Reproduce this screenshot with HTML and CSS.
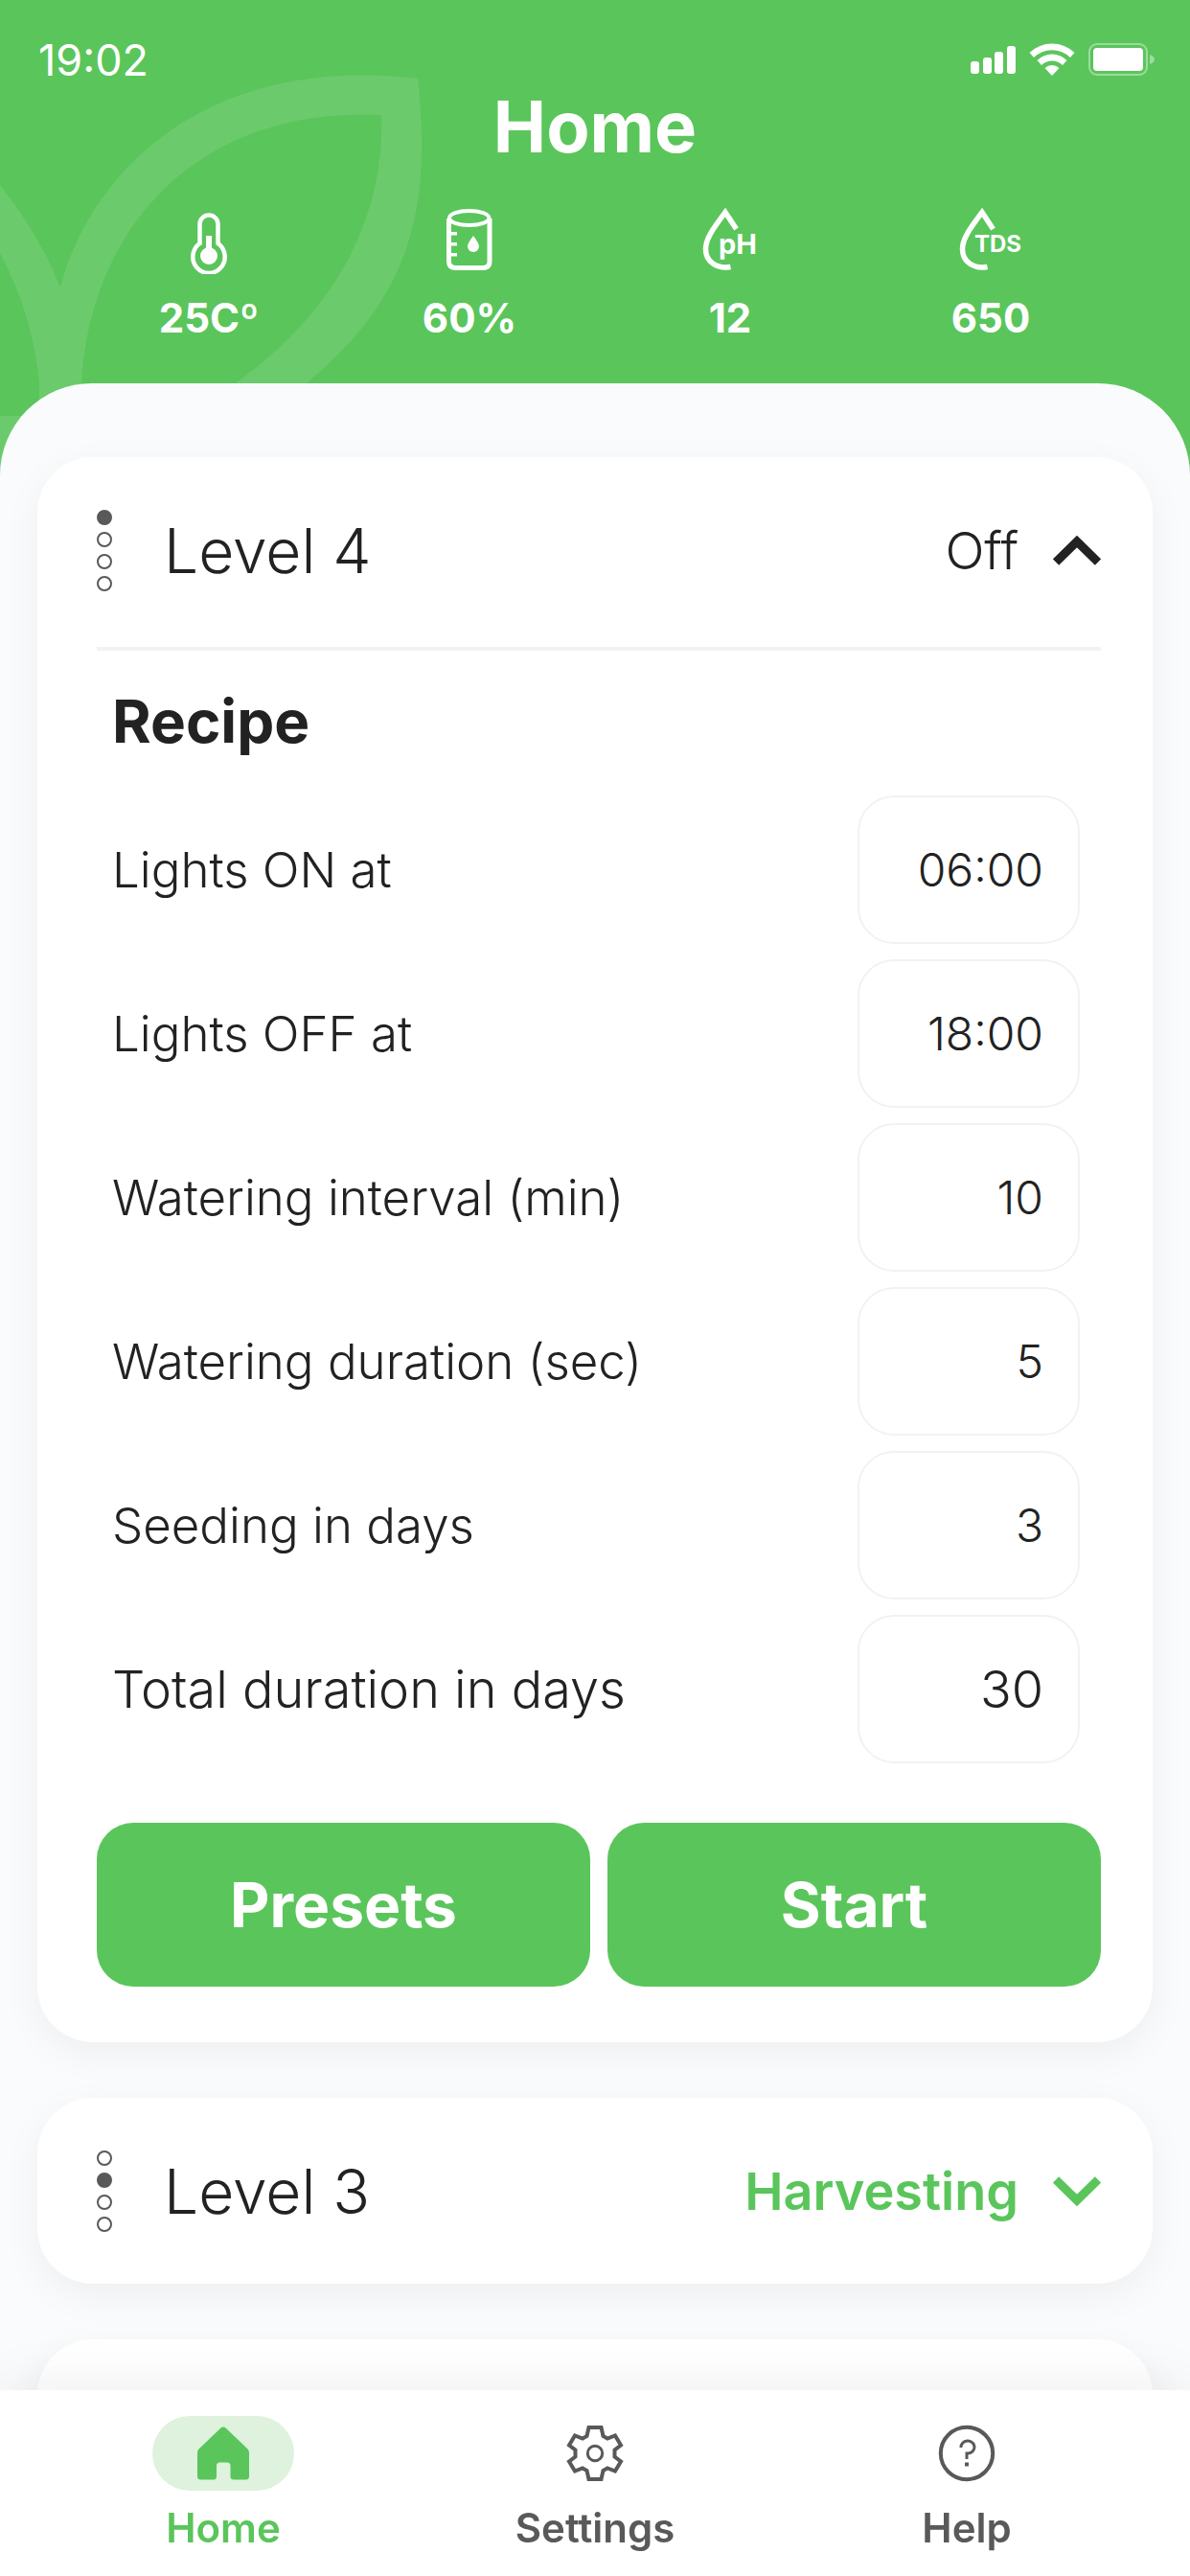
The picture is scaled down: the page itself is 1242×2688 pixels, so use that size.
FILE: index.html
```html
<!DOCTYPE html>
<html lang="en">
<head>
  <meta charset="utf-8">
  <meta name="viewport" content="width=device-width, initial-scale=1">
  <title>Home</title>
  <link rel="stylesheet" href="styles.css">
</head>
<body>
  <div class="app">
    <div class="screen">
      <svg class="leaf" viewBox="0 0 460 500" aria-hidden="true">
        <path fill-rule="evenodd" d="M0 193 Q42 247 63 300 C92 186 210 55 436 82 C451 220 428 310 320 400 L246 400 C360 318 402 215 398 120 C220 110 95 225 85 400 L85 434 L41 434 L41 400 Q35 330 0 264 Z"/>
        <path d="M0 434 H60 V500 H0 Z"/>
      </svg>

      <header class="header">
        <div class="status">
          <span class="status-time">19:02</span>
          <div class="status-icons">
            <svg width="47" height="29" viewBox="0 0 47 29" aria-hidden="true">
              <rect x="0" y="16" width="9" height="13" rx="3"/>
              <rect x="13" y="12" width="9" height="17" rx="3"/>
              <rect x="25" y="6" width="9" height="23" rx="3"/>
              <rect x="38" y="0" width="9" height="29" rx="3"/>
            </svg>
            <svg width="48" height="34" viewBox="0 0 48 34" aria-hidden="true">
              <path d="M0.5 10 A34 34 0 0 1 47.500 10 L43 15 A27 27 0 0 0 5 15 Z"/>
              <path d="M8.500 18 A22 22 0 0 1 39.500 18 L35 23 A15.500 15.500 0 0 0 13 23 Z"/>
              <path d="M16.500 26 A11 11 0 0 1 31.500 26 L24 34 Z"/>
            </svg>
            <svg width="69" height="34" viewBox="0 0 69 34" aria-hidden="true">
              <rect x="1" y="1" width="60" height="32" rx="8" fill="none" stroke="#fff" stroke-opacity=".4" stroke-width="2"/>
              <rect x="5" y="5" width="52" height="24" rx="4"/>
              <path d="M64 12 Q69 14 69 17 Q69 20 64 22 Z" fill-opacity=".4"/>
            </svg>
          </div>
        </div>

        <h1 class="title">Home</h1>

        <ul class="stats">
          <li class="stat">
            <svg width="38" height="70" viewBox="0 0 38 70" aria-label="Temperature" role="img">
              <path d="M9.500 38 V18 A9.500 9.500 0 0 1 28.500 18 V38 A16.700 17 0 1 1 9.500 38 Z" fill="none" stroke="#fff" stroke-width="4.500"/>
              <circle cx="19" cy="51" r="9"/>
              <path d="M16 30 H22 V46 H16 Z"/>
            </svg>
            <span>25Cº</span>
          </li>
          <li class="stat">
            <svg width="48" height="70" viewBox="0 0 48 70" aria-label="Tank level" role="img">
              <path d="M2.500 12 V57 Q2.500 63.500 10 63.500 H37.500 Q45 63.500 45 57 V12" fill="none" stroke="#fff" stroke-width="5"/>
              <ellipse cx="23.700" cy="11.500" rx="20.700" ry="7.500" fill="none" stroke="#fff" stroke-width="4"/>
              <path d="M4 26 H11 V29.500 H4 Z M4 37 H11 V40.500 H4 Z M4 48 H11 V51.500 H4 Z"/>
              <path d="M28 30 Q34 38 34 41 A6 6 0 1 1 22 41 Q22 38 28 30 Z"/>
            </svg>
            <span>60%</span>
          </li>
          <li class="stat">
            <svg width="58" height="70" viewBox="0 0 58 70" aria-hidden="true">
              <path d="M35.500 23 L24 5.500 C11 23 3.500 33 3.500 44 C3.500 57 15 65 29.500 62.500" fill="none" stroke="#fff" stroke-width="5.500" stroke-miterlimit="6"/>
              <text class="icon-ph" x="17" y="49">pH</text>
            </svg>
            <span>12</span>
          </li>
          <li class="stat">
            <svg width="66" height="70" viewBox="0 0 66 70" aria-hidden="true">
              <path d="M35.500 23 L24 5.500 C11 23 3.500 33 3.500 44 C3.500 57 15 65 29.500 62.500" fill="none" stroke="#fff" stroke-width="5.500" stroke-miterlimit="6"/>
              <text class="icon-tds" x="16" y="47">TDS</text>
            </svg>
            <span>650</span>
          </li>
        </ul>
      </header>

      <main class="sheet">
        <section class="card">
          <button class="level" type="button" aria-expanded="true">
            <span class="dots"><i class="dot dot-on"></i><i class="dot"></i><i class="dot"></i><i class="dot"></i></span>
            <span class="level-name">Level 4</span>
            <span class="level-state">Off</span>
            <svg class="chevron" width="50" height="31" viewBox="0 0 50 31" aria-hidden="true"><path d="M3 27.500 L25 6 L47 27.500"/></svg>
          </button>

          <form class="recipe">
            <h2 class="recipe-title">Recipe</h2>
            <div class="rows">
              <div class="row"><label for="lights-on">Lights ON at</label><input id="lights-on" type="text" value="06:00"></div>
              <div class="row"><label for="lights-off">Lights OFF at</label><input id="lights-off" type="text" value="18:00"></div>
              <div class="row"><label for="interval">Watering interval (min)</label><input id="interval" type="text" value="10"></div>
              <div class="row"><label for="duration">Watering duration (sec)</label><input id="duration" type="text" value="5"></div>
              <div class="row"><label for="seeding">Seeding in days</label><input id="seeding" type="text" value="3"></div>
              <div class="row row-total"><label for="total">Total duration in days</label><input id="total" type="text" value="30"></div>
            </div>
            <div class="actions">
              <button class="action" type="button">Presets</button>
              <button class="action" type="button">Start</button>
            </div>
          </form>
        </section>

        <section class="card">
          <button class="level level-active" type="button" aria-expanded="false">
            <span class="dots"><i class="dot"></i><i class="dot dot-on"></i><i class="dot"></i><i class="dot"></i></span>
            <span class="level-name">Level 3</span>
            <span class="level-state">Harvesting</span>
            <svg class="chevron" width="50" height="31" viewBox="0 0 50 31" aria-hidden="true"><path d="M3 3.500 L25 25 L47 3.500"/></svg>
          </button>
        </section>

        <section class="card card-next" aria-label="Level 2"></section>
      </main>
    </div>

    <nav class="nav">
      <a class="nav-item nav-current" href="#home">
        <span class="nav-icon">
          <svg width="54" height="56" viewBox="0 0 54 56" aria-hidden="true">
            <path d="M24.500 1.500 Q27 -0.500 29.500 1.500 L52.500 23.500 Q54 25 54 27 V52 Q54 55.500 50.500 55.500 H38 Q34.500 55.500 34.500 52 V41 Q34.500 37.500 31 37.500 H23.500 Q20 37.500 20 41 V52 Q20 55.500 16.500 55.500 H3.500 Q0 55.500 0 52 V27 Q0 25 1.500 23.500 Z"/>
          </svg>
        </span>
        Home
      </a>
      <a class="nav-item" href="#settings">
        <span class="nav-icon">
          <svg width="60" height="60" viewBox="-30 -30 60 60" aria-hidden="true">
            <g fill="none" stroke="#595959" stroke-width="4">
              <path d="M-6.500 -27 H6.500 L8.500 -18 L13 -15.500 L21 -18.500 L27 -8.500 L20.500 -3.500 V3.500 L27 8.500 L21 18.500 L13 15.500 L8.500 18 L6.500 27 H-6.500 L-8.500 18 L-13 15.500 L-21 18.500 L-27 8.500 L-20.500 3.500 V-3.500 L-27 -8.500 L-21 -18.500 L-13 -15.500 L-8.500 -18 Z"/>
              <circle r="7.700" stroke-width="3"/>
            </g>
          </svg>
        </span>
        Settings
      </a>
      <a class="nav-item" href="#help">
        <span class="nav-icon">
          <svg width="60" height="60" viewBox="-30 -30 60 60" aria-hidden="true">
            <g fill="none" stroke="#595959">
              <circle r="27.200" stroke-width="4"/>
              <path stroke-width="3" d="M-6 -6 A7 6.500 0 1 1 1.500 0 H0 V6"/>
              <path stroke-width="4" d="M-2 11.500 H2"/>
            </g>
          </svg>
        </span>
        Help
      </a>
    </nav>
  </div>
</body>
</html>
```
FILE: styles.css
```css
* {
  box-sizing: border-box;
}

body {
  margin: 0;
  font-family: Inter, "Open Sans", sans-serif;
  color: #222;
}

h1,
h2,
ul {
  margin: 0;
  padding: 0;
}

button,
input {
  font: inherit;
  color: inherit;
}

svg {
  display: block;
  flex: none;
}

.app {
  display: flex;
  flex-direction: column;
  height: 100vh;
}

.screen {
  position: relative;
  flex: 1;
  min-height: 0;
  overflow-y: auto;
  scrollbar-width: none;
  background: #5ac55b;
}

.leaf {
  position: absolute;
  top: 0;
  left: 0;
  width: 460px;
  height: 500px;
  fill: #fff;
  opacity: 0.1;
}

/* Header */

.header {
  position: relative;
  padding: 34px 0 40px;
  color: #fff;
  fill: #fff;
}

.status {
  display: flex;
  align-items: center;
  justify-content: space-between;
  height: 56px;
  padding: 0 37px 0 40px;
}

.status-time {
  font-size: 45px;
}

.status-icons {
  display: flex;
  align-items: center;
  gap: 14px;
}

.title {
  font-size: 74px;
  font-weight: 700;
  line-height: 84px;
  text-align: center;
}

.stats {
  display: grid;
  grid-template-columns: repeat(4, 1fr);
  margin-top: 42px;
  padding: 0 72px 0 82px;
  list-style: none;
}

.stat {
  display: flex;
  flex-direction: column;
  align-items: center;
  gap: 18px;
  font-size: 42px;
  font-weight: 700;
  line-height: 56px;
}

.icon-ph {
  font-size: 29px;
}

.icon-tds {
  font-size: 24px;
}

/* Level cards */

.sheet {
  position: relative;
  display: flex;
  flex-direction: column;
  gap: 58px;
  padding: 77px 39px 58px;
  border-radius: 96px 96px 0 0;
  background: #fafbfd;
}

.card {
  padding: 0 54px 0 62px;
  border-radius: 58px;
  background: #fff;
  box-shadow: 0 12px 40px rgba(0, 0, 0, 0.05);
}

.card-next {
  min-height: 194px;
}

.level {
  display: flex;
  align-items: center;
  width: 100%;
  height: 194px;
  padding: 0;
  border: 0;
  background: none;
  text-align: left;
}

.dots {
  display: grid;
  gap: 7px;
  margin-right: 54px;
}

.dot {
  width: 16px;
  height: 16px;
  border: 2px solid #595959;
  border-radius: 50%;
}

.dot-on {
  background: #595959;
}

.level-name {
  flex: 1;
  font-size: 64px;
  font-weight: 300;
}

.level-state {
  margin-right: 36px;
  font-size: 54px;
  font-weight: 300;
}

.chevron {
  fill: none;
  stroke: #222;
  stroke-width: 9;
}

.level-active .level-state {
  color: #5ac55b;
  font-weight: 600;
}

.level-active .chevron {
  stroke: #5ac55b;
}

/* Recipe form */

.recipe {
  margin-top: 4px;
  padding: 38px 0 58px;
  border-top: 4px solid #f2f2f3;
}

.recipe-title {
  padding-left: 16px;
  font-size: 62px;
  font-weight: 700;
  line-height: 72px;
}

.rows {
  display: grid;
  gap: 16px;
  margin: 41px 22px 62px 16px;
  font-weight: 300;
}

.row {
  display: flex;
  align-items: center;
  justify-content: space-between;
  font-size: 51px;
}

.row input {
  width: 232px;
  height: 155px;
  padding: 0 36px;
  border: 2px solid #f2f2f3;
  border-radius: 38px;
  background: #fff;
  font-size: 48px;
  text-align: right;
}

.row-total,
.row-total input {
  font-size: 54px;
}

.actions {
  display: grid;
  grid-template-columns: 1fr 1fr;
  gap: 18px;
}

.action {
  height: 171px;
  padding: 0;
  border: 0;
  border-radius: 38px;
  background: #5ac55b;
  color: #fff;
  font-size: 64px;
  font-weight: 700;
}

/* Bottom navigation */

.nav {
  position: relative;
  display: grid;
  grid-template-columns: repeat(3, 1fr);
  padding: 27px 39px 24px;
  background: #fff;
  box-shadow: 0 0 58px rgba(0, 0, 0, 0.08);
}

.nav-item {
  display: flex;
  flex-direction: column;
  align-items: center;
  gap: 13px;
  color: #595959;
  font-size: 42px;
  font-weight: 600;
  line-height: 52px;
  text-decoration: none;
}

.nav-icon {
  display: grid;
  place-items: center;
  width: 148px;
  height: 78px;
  border-radius: 39px;
}

.nav-current {
  color: #5ac55b;
  fill: #5ac55b;
}

.nav-current .nav-icon {
  background: #def2de;
}
```
